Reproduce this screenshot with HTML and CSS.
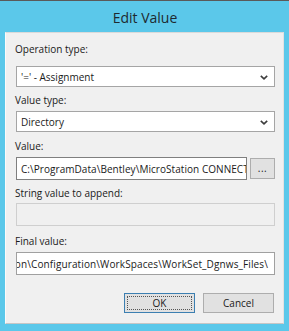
FILE: index.html
```html
<!DOCTYPE html>
<html>
<head>
<meta charset="utf-8">
<link rel="stylesheet" href="styles.css">
</head>
<body>
<div class="window">
  <div class="titlebar">Edit Value</div>
  <div class="panel">
    <div class="label l1">Operation type:</div>
    <div class="select s1"><span class="val">'=' - Assignment</span><svg class="chev" width="8" height="5" viewBox="0 0 8 5"><path d="M0.8 0.8 L4 3.8 L7.2 0.8" fill="none" stroke="#3c3c3c" stroke-width="1.6"/></svg></div>
    <div class="label l2">Value type:</div>
    <div class="select s2"><span class="val">Directory</span><svg class="chev" width="8" height="5" viewBox="0 0 8 5"><path d="M0.8 0.8 L4 3.8 L7.2 0.8" fill="none" stroke="#3c3c3c" stroke-width="1.6"/></svg></div>
    <div class="label l3">Value:</div>
    <div class="valrow">
      <div class="input active"><span class="val path-a">C:\ProgramData\Bentley\MicroStation CONNECT Edition\Configuration\WorkSpaces\WorkSet_Dgnws_Files\</span></div>
      <div class="browse">...</div>
    </div>
    <div class="label l4">String value to append:</div>
    <div class="input disabled"></div>
    <div class="label l5">Final value:</div>
    <div class="input final"><span class="val path">C:\ProgramData\Bentley\MicroStation CONNECT Edition\Configuration\WorkSpaces\WorkSet_Dgnws_Files\</span></div>
    <div class="buttons">
      <div class="btn default"><span class="focus">OK</span></div>
      <div class="btn">Cancel</div>
    </div>
  </div>
</div>
</body>
</html>
```
FILE: styles.css
```css
* { box-sizing: border-box; }
html, body { margin: 0; padding: 0; background: #5bc8ea; }
body {
  font-family: "Open Sans", "Noto Sans", sans-serif;
  font-size: 10px;
  color: #1a1a1a;
}
.window {
  width: 289px;
  height: 331px;
  background: #5bc8ea;
  border-top: 1px solid #5a5a5a;
  display: flex;
  flex-direction: column;
}
.titlebar {
  height: 31px;
  line-height: 34px;
  text-align: center;
  font-size: 14px;
  color: #1e2a30;
  padding-left: 1px;
}
.panel {
  height: 292px;
  margin: 0 5px 0 5px;
  background: #f0f0f0;
  border-top: 1px solid #dadada;
  border-left: 1px solid #fbfbfb;
  border-right: 1px solid #e2e2e2;
  border-bottom: 1px solid #c6c6c6;
  padding: 0 8px 0 10px;
  display: flex;
  flex-direction: column;
}
.label {
  line-height: 13px;
  height: 13px;
  margin-left: -1px;
  white-space: nowrap;
}
.l1 { margin-top: 10px; }
.l2 { margin-top: 7px; }
.l3 { margin-top: 8px; }
.l4 { margin-top: 7px; }
.l5 { margin-top: 9px; }
.select {
  height: 21px;
  background: #fff;
  border: 1px solid #a5a5a5;
  display: flex;
  align-items: center;
  justify-content: space-between;
  padding: 0 6px 0 4px;
}
.s1 { margin-top: 10px; }
.s2 { margin-top: 4px; }
.val { white-space: nowrap; }
.path { letter-spacing: 0.12px; }
.path-a { letter-spacing: 0.05px; }
.chev { display: block; margin-top: 1px; }
.valrow {
  margin-top: 4px;
  display: flex;
  gap: 3px;
  height: 23px;
}
.input {
  height: 23px;
  background: #fff;
  border: 1px solid #a0a0a0;
  display: flex;
  align-items: center;
  overflow: hidden;
  white-space: nowrap;
}
.input.active {
  width: 231px;
  border-color: #7f7f7f;
  padding-left: 4px;
}
.browse {
  width: 25px;
  height: 21px;
  margin-top: 1px;
  background: #e1e1e1;
  border: 1px solid #adadad;
  text-align: center;
  line-height: 18px;
  font-size: 10px;
  letter-spacing: 0.5px;
}
.input.disabled {
  margin-top: 3px;
  background: #f0f0f0;
  border-color: #cfcfcf;
}
.input.final {
  margin-top: 4px;
  justify-content: flex-end;
  padding-right: 6px;
}
.buttons {
  margin-top: 18px;
  display: flex;
  justify-content: flex-end;
  gap: 8px;
  padding-right: 1px;
}
.btn {
  width: 71px;
  height: 20px;
  background: #e1e1e1;
  border: 1px solid #adadad;
  display: flex;
  align-items: center;
  justify-content: center;
  font-size: 10px;
}
.btn.default {
  border-color: #3c7fb1;
  padding: 2px;
}
.btn.default .focus {
  width: 100%;
  height: 100%;
  border: 1px dotted #555;
  display: flex;
  align-items: center;
  justify-content: center;
}
```
